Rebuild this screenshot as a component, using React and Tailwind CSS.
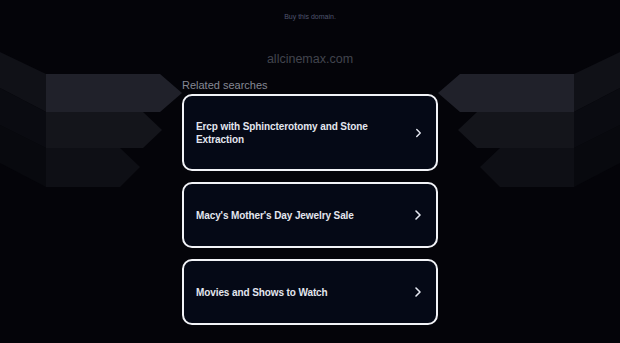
import React from 'react';

const searches = [
  'Ercp with Sphincterotomy and Stone Extraction',
  "Macy's Mother's Day Jewelry Sale",
  'Movies and Shows to Watch',
];

// fondo decorativo (cintas/flechas a los lados)
function Ribbons() {
  return (
    <svg className="absolute inset-0 pointer-events-none" width="620" height="343" viewBox="0 0 620 343">
      {/* izquierda */}
      <polygon points="0,52 46,74 46,112 0,88" fill="#101117" />
      <polygon points="0,88 46,112 46,148 0,125" fill="#0a0b11" />
      <polygon points="0,125 46,148 46,187 0,163" fill="#08090e" />
      <polygon points="46,74 160,74 182,93 160,112 46,112" fill="#20212a" />
      <polygon points="46,112 143,112 162,130 143,148 46,148" fill="#14151b" />
      <polygon points="46,148 120,148 140,167 120,187 46,187" fill="#0e0f15" />
      {/* derecha */}
      <polygon points="620,52 574,74 574,112 620,88" fill="#101117" />
      <polygon points="620,88 574,112 574,148 620,125" fill="#0a0b11" />
      <polygon points="620,125 574,148 574,187 620,163" fill="#08090e" />
      <polygon points="574,74 460,74 438,93 460,112 574,112" fill="#20212a" />
      <polygon points="574,112 477,112 458,130 477,148 574,148" fill="#14151b" />
      <polygon points="574,148 500,148 480,167 500,187 574,187" fill="#0e0f15" />
    </svg>
  );
}

function Chevron() {
  return (
    <svg width="8" height="12" viewBox="0 0 8 12" fill="none">
      <path d="M2 2l4 4-4 4" stroke="#e6e9f2" strokeWidth="1.6" strokeLinecap="round" strokeLinejoin="round" />
    </svg>
  );
}

export default function App() {
  return (
    <div
      className="relative w-[620px] h-[343px] overflow-hidden bg-[#040409]"
      style={{ fontFamily: '"Liberation Sans", Arial, sans-serif' }}
    >
      <Ribbons />
      <div className="relative flex flex-col items-center">
        <div className="mt-[13px] text-[7px] leading-[8px] text-[#50556e]">Buy this domain.</div>
        <div className="mt-[31px] text-[12.5px] leading-[15px] text-[#42444e]">allcinemax.com</div>

        <div className="mt-[12px] w-[256px]">
          <div className="text-[11px] leading-[12px] text-[#858894] mb-[3px]">Related searches</div>
          <div className="flex flex-col gap-[11px]">
            {searches.map((s, i) => (
              <div
                key={s}
                className={
                  'flex items-center justify-between rounded-[10px] border-2 border-[#f2f3f7] bg-[#050916] pl-[12px] pr-[14px] ' +
                  (i === 0 ? 'h-[77px]' : 'h-[66px]')
                }
              >
                <span className="text-[10px] leading-[13px] font-bold tracking-[-0.1px] text-[#e3e6ef] pr-[24px]">{s}</span>
                <Chevron />
              </div>
            ))}
          </div>
        </div>
      </div>
    </div>
  );
}
